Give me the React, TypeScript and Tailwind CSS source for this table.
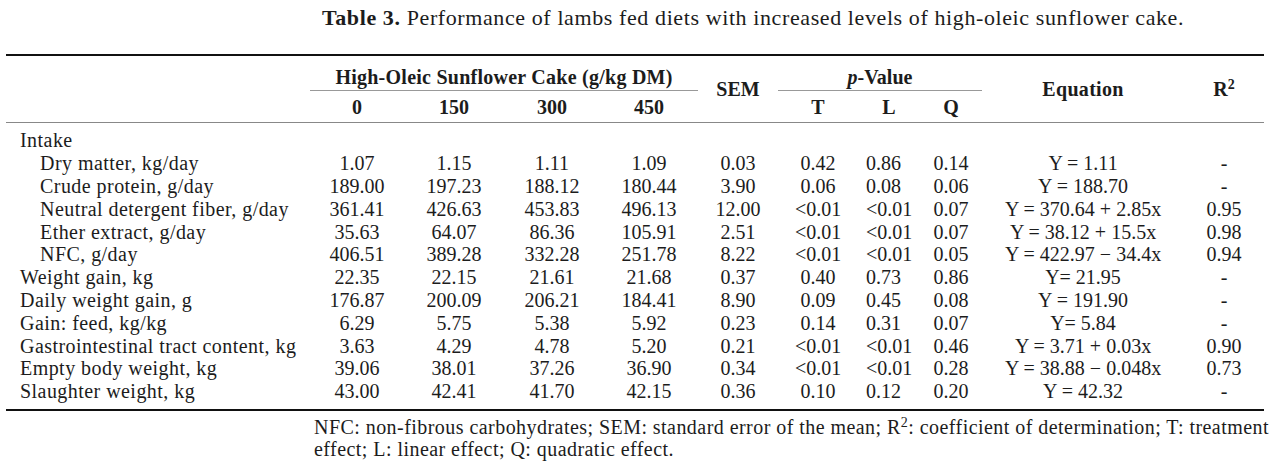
import React from "react";

type Row = {
  label: string;
  indent?: boolean;
  header?: boolean;
  v?: string[];
  sem?: string;
  t?: string;
  l?: string;
  q?: string;
  eq?: string;
  r2?: string;
};

const rows: Row[] = [
  { label: "Intake", header: true },
  { label: "Dry matter, kg/day", indent: true, v: ["1.07", "1.15", "1.11", "1.09"], sem: "0.03", t: "0.42", l: "0.86", q: "0.14", eq: "Y = 1.11", r2: "-" },
  { label: "Crude protein, g/day", indent: true, v: ["189.00", "197.23", "188.12", "180.44"], sem: "3.90", t: "0.06", l: "0.08", q: "0.06", eq: "Y = 188.70", r2: "-" },
  { label: "Neutral detergent fiber, g/day", indent: true, v: ["361.41", "426.63", "453.83", "496.13"], sem: "12.00", t: "<0.01", l: "<0.01", q: "0.07", eq: "Y = 370.64 + 2.85x", r2: "0.95" },
  { label: "Ether extract, g/day", indent: true, v: ["35.63", "64.07", "86.36", "105.91"], sem: "2.51", t: "<0.01", l: "<0.01", q: "0.07", eq: "Y = 38.12 + 15.5x", r2: "0.98" },
  { label: "NFC, g/day", indent: true, v: ["406.51", "389.28", "332.28", "251.78"], sem: "8.22", t: "<0.01", l: "<0.01", q: "0.05", eq: "Y = 422.97 \u2212 34.4x", r2: "0.94" },
  { label: "Weight gain, kg", v: ["22.35", "22.15", "21.61", "21.68"], sem: "0.37", t: "0.40", l: "0.73", q: "0.86", eq: "Y= 21.95", r2: "-" },
  { label: "Daily weight gain, g", v: ["176.87", "200.09", "206.21", "184.41"], sem: "8.90", t: "0.09", l: "0.45", q: "0.08", eq: "Y = 191.90", r2: "-" },
  { label: "Gain: feed, kg/kg", v: ["6.29", "5.75", "5.38", "5.92"], sem: "0.23", t: "0.14", l: "0.31", q: "0.07", eq: "Y= 5.84", r2: "-" },
  { label: "Gastrointestinal tract content, kg", v: ["3.63", "4.29", "4.78", "5.20"], sem: "0.21", t: "<0.01", l: "<0.01", q: "0.46", eq: "Y = 3.71 + 0.03x", r2: "0.90" },
  { label: "Empty body weight, kg", v: ["39.06", "38.01", "37.26", "36.90"], sem: "0.34", t: "<0.01", l: "<0.01", q: "0.28", eq: "Y = 38.88 \u2212 0.048x", r2: "0.73" },
  { label: "Slaughter weight, kg", v: ["43.00", "42.41", "41.70", "42.15"], sem: "0.36", t: "0.10", l: "0.12", q: "0.20", eq: "Y = 42.32", r2: "-" },
];

export default function App() {
  return (
    <div className="w-[1280px] h-[462px] bg-white text-[#1c1c1c] font-['Liberation_Serif',serif] text-[20px] leading-[22.8px] overflow-hidden">
      {/* Caption */}
      <div className="pt-[7px] pl-[322px] whitespace-nowrap text-[22px] tracking-[0.6px]">
        <span className="font-bold">Table 3.</span> Performance of lambs fed diets with increased levels of high-oleic sunflower cake.
      </div>

      <div className="mt-[24px] mx-[6px] w-[1258px] border-t-2 border-b-[2.5px] border-[#111]">
        <table className="table-fixed w-full border-separate border-spacing-0">
          <colgroup>
            <col className="w-[304px]" />
            <col className="w-[94px]" />
            <col className="w-[100px]" />
            <col className="w-[96px]" />
            <col className="w-[98px]" />
            <col className="w-[80px]" />
            <col className="w-[80px]" />
            <col className="w-[62px]" />
            <col className="w-[62px]" />
            <col className="w-[202px]" />
            <col className="w-[80px]" />
          </colgroup>
          <thead className="font-bold">
            <tr>
              <th rowSpan={2} className="border-b-[1.5px] border-[#888]" />
              <th colSpan={4} className="pt-[10px] pb-px border-b border-[#999] font-bold tracking-[0.25px]">
                High-Oleic Sunflower Cake (g/kg DM)
              </th>
              <th rowSpan={2} className="align-middle border-b-[1.5px] border-[#888] font-bold">SEM</th>
              <th colSpan={3} className="pt-[10px] pb-px border-b border-[#999] font-bold">
                <span className="italic">p</span>-Value
              </th>
              <th rowSpan={2} className="align-middle border-b-[1.5px] border-[#888] font-bold tracking-[0.3px]">Equation</th>
              <th rowSpan={2} className="align-middle border-b-[1.5px] border-[#888] font-bold">
                R<sup className="text-[14px]">2</sup>
              </th>
            </tr>
            <tr>
              {["0", "150", "300", "450", "T", "L", "Q"].map((h) => (
                <th key={h} className="pt-[5px] pb-[4px] border-b-[1.5px] border-[#888] font-bold">
                  {h}
                </th>
              ))}
            </tr>
          </thead>
          <tbody>
            {rows.map((r, i) => {
              const first = i === 0;
              const last = i === rows.length - 1;
              const pad = first ? "pt-[6px]" : last ? "pb-[6px]" : "";
              return (
                <tr key={r.label}>
                  <td className={`${r.indent ? "pl-[34px]" : "pl-[14px]"} whitespace-nowrap tracking-[0.45px] ${pad}`}>{r.label}</td>
                  {r.header ? (
                    <td colSpan={10} className={pad} />
                  ) : (
                    <>
                      {r.v!.map((x, j) => (
                        <td key={j} className={`text-center ${pad}`}>
                          {x}
                        </td>
                      ))}
                      <td className={`text-center ${pad}`}>{r.sem}</td>
                      <td className={`text-center ${pad}`}>{r.t}</td>
                      <td className={`pl-[8px] ${pad}`}>{r.l}</td>
                      <td className={`text-center ${pad}`}>{r.q}</td>
                      <td className={`text-center whitespace-nowrap ${pad}`}>{r.eq}</td>
                      <td className={`text-center ${pad}`}>{r.r2}</td>
                    </>
                  )}
                </tr>
              );
            })}
          </tbody>
        </table>
      </div>

      {/* Footnote */}
      <div className="pt-[5px] pl-[314px] whitespace-nowrap leading-[22.5px] tracking-[0.45px]">
        NFC: non-fibrous carbohydrates; SEM: standard error of the mean; R<sup className="text-[14px]">2</sup>: coefficient of determination; T: treatment
        <br />
        effect; L: linear effect; Q: quadratic effect.
      </div>
    </div>
  );
}
